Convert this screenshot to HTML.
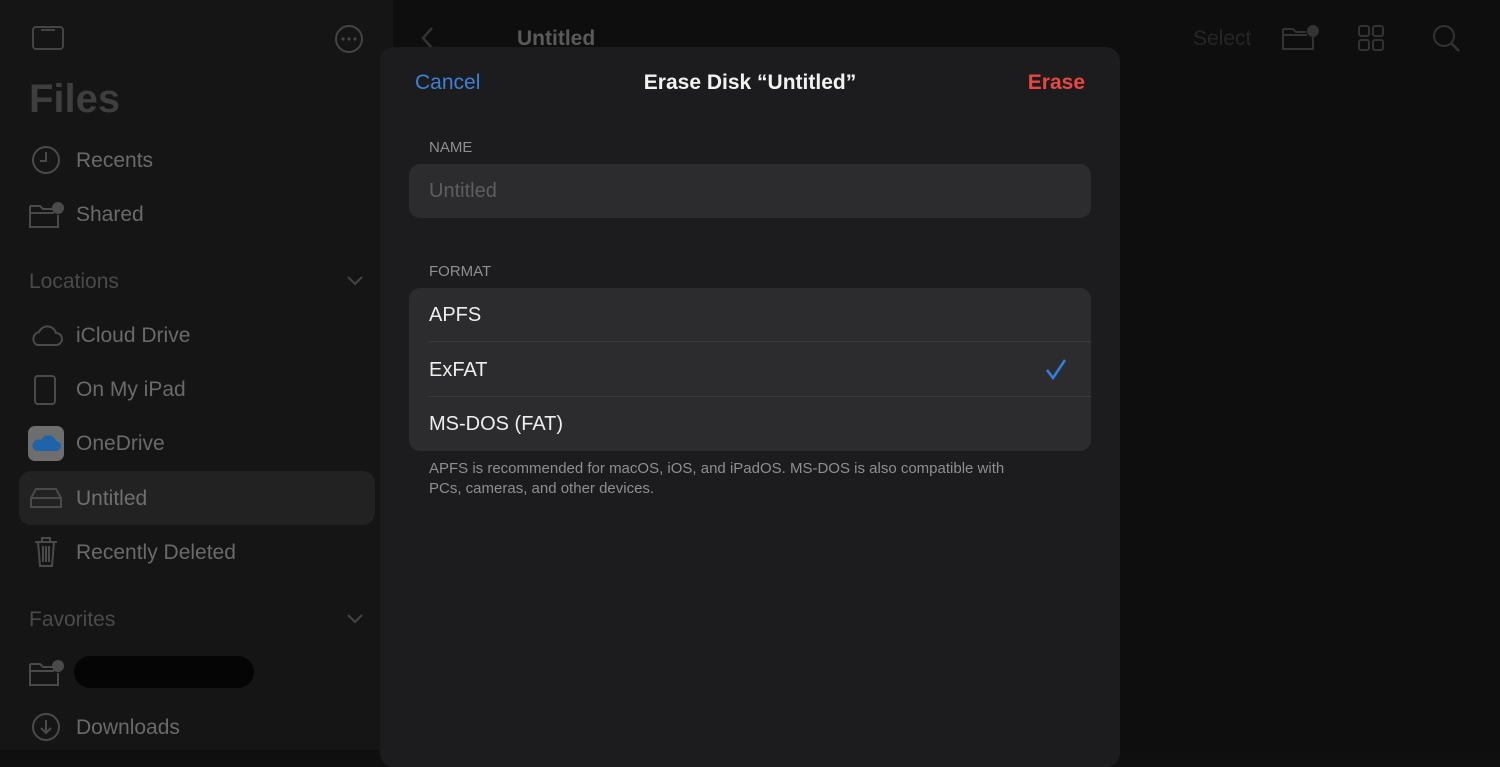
<!DOCTYPE html>
<html><head><meta charset="utf-8"><style>
*{margin:0;padding:0;box-sizing:border-box}
body{width:1500px;height:750px;overflow:hidden;background:#0f0f0f;font-family:"Liberation Sans",sans-serif;position:relative}
.sb{position:absolute;left:0;top:0;width:393px;height:750px;background:#151515}
.main{position:absolute;left:393px;top:0;right:0;height:750px;background:#0e0e0e}
.t{position:absolute;color:#6a6a6a;font-size:21px}
.h{position:absolute;color:#4a4a4a;font-size:21px}
svg{position:absolute}
.modal{position:absolute;left:380px;top:47px;width:740px;height:720px;background:#1c1c1e;border-radius:14px}
.m{position:absolute}
</style></head><body>
<div class="sb">
<svg style="left:32px;top:26px" width="32" height="24"><rect x="1" y="1" width="30" height="22" rx="3" fill="none" stroke="#444" stroke-width="2"/><line x1="9" y1="4" x2="23" y2="4" stroke="#444" stroke-width="2"/></svg>
<svg style="left:334px;top:24px" width="30" height="30"><circle cx="15" cy="15" r="13" fill="none" stroke="#444" stroke-width="2"/><circle cx="9" cy="15" r="1.6" fill="#444"/><circle cx="15" cy="15" r="1.6" fill="#444"/><circle cx="21" cy="15" r="1.6" fill="#444"/></svg>
<div class="t" style="left:29px;top:77px;font-size:40px;font-weight:bold;color:#3e3e3e">Files</div>
<svg style="left:31px;top:145px" width="30" height="30"><circle cx="15" cy="15" r="13" fill="none" stroke="#4a4a4a" stroke-width="2"/><path d="M15 7v9h-6" fill="none" stroke="#4a4a4a" stroke-width="2"/></svg>
<div class="t" style="left:76px;top:149px">Recents</div>
<svg style="left:28px;top:200px" width="38" height="30"><path d="M2 6h10l3 3h10M2 6v21h28v-12M2 13h24" fill="none" stroke="#4a4a4a" stroke-width="2"/><circle cx="30" cy="8" r="6" fill="#4a4a4a"/></svg>
<div class="t" style="left:76px;top:203px">Shared</div>
<div class="h" style="left:29px;top:270px">Locations</div>
<svg style="left:346px;top:275px" width="18" height="12"><path d="M2 2l7 7 7-7" fill="none" stroke="#444" stroke-width="2"/></svg>
<svg style="left:29px;top:322px" width="34" height="26"><path d="M8 23h19a6 6 0 0 0 0-12 9 9 0 0 0-17-1 7 7 0 0 0-2 13z" fill="none" stroke="#4a4a4a" stroke-width="2"/></svg>
<div class="t" style="left:76px;top:324px">iCloud Drive</div>
<svg style="left:33px;top:374px" width="24" height="32"><rect x="2" y="2" width="20" height="28" rx="3" fill="none" stroke="#4a4a4a" stroke-width="2"/></svg>
<div class="t" style="left:76px;top:378px">On My iPad</div>
<div style="position:absolute;left:28px;top:426px;width:36px;height:35px;border-radius:7px;background:#6e6e6e"></div>
<svg style="left:31px;top:433px" width="30" height="20"><path d="M5 18h20a5 5 0 0 0 0-10 8 8 0 0 0-15-1 6 6 0 0 0-5 11z" fill="#1f63a8"/></svg>
<div class="t" style="left:76px;top:432px">OneDrive</div>
<div style="position:absolute;left:19px;top:471px;width:356px;height:54px;border-radius:12px;background:#222"></div>
<svg style="left:29px;top:486px" width="34" height="24"><path d="M2 12l5-9h20l5 9v9H2z M2 12h30" fill="none" stroke="#4a4a4a" stroke-width="2"/></svg>
<div class="t" style="left:76px;top:487px;color:#707070">Untitled</div>
<svg style="left:33px;top:536px" width="26" height="32"><path d="M2 6h22M9 6V2h8v4M5 6l2 24h12l2-24M10 10v16M13 10v16M16 10v16" fill="none" stroke="#4a4a4a" stroke-width="2"/></svg>
<div class="t" style="left:76px;top:541px">Recently Deleted</div>
<div class="h" style="left:29px;top:608px">Favorites</div>
<svg style="left:346px;top:613px" width="18" height="12"><path d="M2 2l7 7 7-7" fill="none" stroke="#444" stroke-width="2"/></svg>
<svg style="left:28px;top:658px" width="38" height="30"><path d="M2 6h10l3 3h10M2 6v21h28v-12M2 13h24" fill="none" stroke="#4a4a4a" stroke-width="2"/><circle cx="30" cy="8" r="6" fill="#4a4a4a"/></svg>
<div style="position:absolute;left:74px;top:656px;width:180px;height:32px;background:#050505;border-radius:16px"></div>
<svg style="left:31px;top:712px" width="30" height="30"><circle cx="15" cy="15" r="13" fill="none" stroke="#4a4a4a" stroke-width="2"/><path d="M15 8v13M10 16l5 5 5-5" fill="none" stroke="#4a4a4a" stroke-width="2"/></svg>
<div class="t" style="left:76px;top:716px">Downloads</div>
</div>
<div class="main">
<svg style="left:27px;top:26px" width="14" height="24"><path d="M12 2L3 12l9 10" fill="none" stroke="#333" stroke-width="2.5"/></svg>
<div class="t" style="left:124px;top:27px;color:#5a5a5a;font-size:21px;font-weight:bold">Untitled</div>
<div class="t" style="left:800px;top:27px;color:#262626">Select</div>
<svg style="left:888px;top:24px" width="40" height="28"><path d="M2 5h10l3 3h10M2 5v20h30v-12M2 11h24" fill="none" stroke="#333" stroke-width="2"/><circle cx="32" cy="7" r="6" fill="#333"/></svg>
<svg style="left:965px;top:25px" width="26" height="26"><rect x="1" y="1" width="10" height="10" rx="2" fill="none" stroke="#333" stroke-width="2"/><rect x="15" y="1" width="10" height="10" rx="2" fill="none" stroke="#333" stroke-width="2"/><rect x="1" y="15" width="10" height="10" rx="2" fill="none" stroke="#333" stroke-width="2"/><rect x="15" y="15" width="10" height="10" rx="2" fill="none" stroke="#333" stroke-width="2"/></svg>
<svg style="left:1039px;top:24px" width="30" height="30"><circle cx="12" cy="12" r="10" fill="none" stroke="#333" stroke-width="2"/><path d="M19 19l8 8" stroke="#333" stroke-width="2.5"/></svg>
</div>
<div class="modal">
<div class="m" style="left:35px;top:24px;color:#3b82d6;font-size:21px">Cancel</div>
<div class="m" style="left:0;width:740px;text-align:center;top:24px;color:#f2f2f2;font-size:21px;font-weight:bold">Erase Disk “Untitled”</div>
<div class="m" style="right:35px;top:24px;color:#e8483f;font-size:21px;font-weight:bold">Erase</div>
<div class="m" style="left:49px;top:92px;color:#8e8e93;font-size:15px">NAME</div>
<div class="m" style="left:29px;top:117px;width:682px;height:54px;background:#2c2c2e;border-radius:11px"></div>
<div class="m" style="left:49px;top:133px;color:#5e5e62;font-size:20px">Untitled</div>
<div class="m" style="left:49px;top:216px;color:#8e8e93;font-size:15px">FORMAT</div>
<div class="m" style="left:29px;top:241px;width:682px;height:163px;background:#2c2c2e;border-radius:11px"></div>
<div class="m" style="left:49px;top:294px;width:662px;height:1px;background:#3a3a3c"></div>
<div class="m" style="left:49px;top:349px;width:662px;height:1px;background:#3a3a3c"></div>
<div class="m" style="left:49px;top:257px;color:#eee;font-size:20px">APFS</div>
<div class="m" style="left:49px;top:312px;color:#eee;font-size:20px">ExFAT</div>
<svg style="left:665px;top:311px" width="22" height="22"><path d="M2 12l6 8L20 2" fill="none" stroke="#2f80e0" stroke-width="2.5"/></svg>
<div class="m" style="left:49px;top:366px;color:#eee;font-size:20px">MS-DOS (FAT)</div>
<div class="m" style="left:49px;top:412px;width:600px;color:#8e8e93;font-size:15px;line-height:20px">APFS is recommended for macOS, iOS, and iPadOS. MS-DOS is also compatible with PCs, cameras, and other devices.</div>
</div>
</body></html>
